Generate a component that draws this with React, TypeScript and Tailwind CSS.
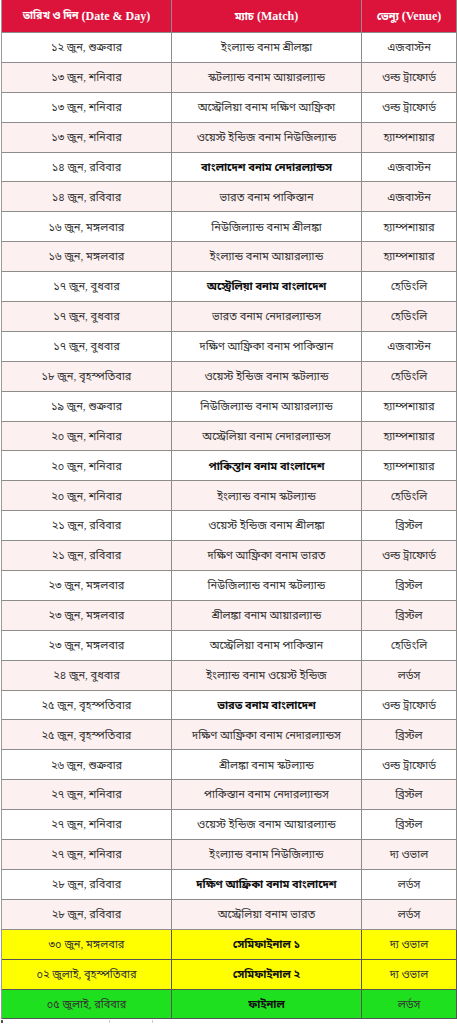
const rows: [string, string, string, boolean][] = [
  ["১২ জুন, শুক্রবার", "ইংল্যান্ড বনাম শ্রীলঙ্কা", "এজবাস্টন", false],
  ["১৩ জুন, শনিবার", "স্কটল্যান্ড বনাম আয়ারল্যান্ড", "ওল্ড ট্রাফোর্ড", false],
  ["১৩ জুন, শনিবার", "অস্ট্রেলিয়া বনাম দক্ষিণ আফ্রিকা", "ওল্ড ট্রাফোর্ড", false],
  ["১৩ জুন, শনিবার", "ওয়েস্ট ইন্ডিজ বনাম নিউজিল্যান্ড", "হ্যাম্পশায়ার", false],
  ["১৪ জুন, রবিবার", "বাংলাদেশ বনাম নেদারল্যান্ডস", "এজবাস্টন", true],
  ["১৪ জুন, রবিবার", "ভারত বনাম পাকিস্তান", "এজবাস্টন", false],
  ["১৬ জুন, মঙ্গলবার", "নিউজিল্যান্ড বনাম শ্রীলঙ্কা", "হ্যাম্পশায়ার", false],
  ["১৬ জুন, মঙ্গলবার", "ইংল্যান্ড বনাম আয়ারল্যান্ড", "হ্যাম্পশায়ার", false],
  ["১৭ জুন, বুধবার", "অস্ট্রেলিয়া বনাম বাংলাদেশ", "হেডিংলি", true],
  ["১৭ জুন, বুধবার", "ভারত বনাম নেদারল্যান্ডস", "হেডিংলি", false],
  ["১৭ জুন, বুধবার", "দক্ষিণ আফ্রিকা বনাম পাকিস্তান", "এজবাস্টন", false],
  ["১৮ জুন, বৃহস্পতিবার", "ওয়েস্ট ইন্ডিজ বনাম স্কটল্যান্ড", "হেডিংলি", false],
  ["১৯ জুন, শুক্রবার", "নিউজিল্যান্ড বনাম আয়ারল্যান্ড", "হ্যাম্পশায়ার", false],
  ["২০ জুন, শনিবার", "অস্ট্রেলিয়া বনাম নেদারল্যান্ডস", "হ্যাম্পশায়ার", false],
  ["২০ জুন, শনিবার", "পাকিস্তান বনাম বাংলাদেশ", "হ্যাম্পশায়ার", true],
  ["২০ জুন, শনিবার", "ইংল্যান্ড বনাম স্কটল্যান্ড", "হেডিংলি", false],
  ["২১ জুন, রবিবার", "ওয়েস্ট ইন্ডিজ বনাম শ্রীলঙ্কা", "ব্রিস্টল", false],
  ["২১ জুন, রবিবার", "দক্ষিণ আফ্রিকা বনাম ভারত", "ওল্ড ট্রাফোর্ড", false],
  ["২৩ জুন, মঙ্গলবার", "নিউজিল্যান্ড বনাম স্কটল্যান্ড", "ব্রিস্টল", false],
  ["২৩ জুন, মঙ্গলবার", "শ্রীলঙ্কা বনাম আয়ারল্যান্ড", "ব্রিস্টল", false],
  ["২৩ জুন, মঙ্গলবার", "অস্ট্রেলিয়া বনাম পাকিস্তান", "হেডিংলি", false],
  ["২৪ জুন, বুধবার", "ইংল্যান্ড বনাম ওয়েস্ট ইন্ডিজ", "লর্ডস", false],
  ["২৫ জুন, বৃহস্পতিবার", "ভারত বনাম বাংলাদেশ", "ওল্ড ট্রাফোর্ড", true],
  ["২৫ জুন, বৃহস্পতিবার", "দক্ষিণ আফ্রিকা বনাম নেদারল্যান্ডস", "ব্রিস্টল", false],
  ["২৬ জুন, শুক্রবার", "শ্রীলঙ্কা বনাম স্কটল্যান্ড", "ওল্ড ট্রাফোর্ড", false],
  ["২৭ জুন, শনিবার", "পাকিস্তান বনাম নেদারল্যান্ডস", "ব্রিস্টল", false],
  ["২৭ জুন, শনিবার", "ওয়েস্ট ইন্ডিজ বনাম আয়ারল্যান্ড", "ব্রিস্টল", false],
  ["২৭ জুন, শনিবার", "ইংল্যান্ড বনাম নিউজিল্যান্ড", "দ্য ওভাল", false],
  ["২৮ জুন, রবিবার", "দক্ষিণ আফ্রিকা বনাম বাংলাদেশ", "লর্ডস", true],
  ["২৮ জুন, রবিবার", "অস্ট্রেলিয়া বনাম ভারত", "লর্ডস", false],
];

const knockouts: [string, string, string, string][] = [
  ["৩০ জুন, মঙ্গলবার", "সেমিফাইনাল ১", "দ্য ওভাল", "bg-[#ffff00]"],
  ["০২ জুলাই, বৃহস্পতিবার", "সেমিফাইনাল ২", "দ্য ওভাল", "bg-[#ffff00]"],
  ["০৫ জুলাই, রবিবার", "ফাইনাল", "লর্ডস", "bg-[#1fe01f]"],
];

const cell = "flex items-center justify-center gap-[3px] border-r border-[#8c8c8c] text-center whitespace-nowrap";

export default function App() {
  return (
    <div
      className="w-[457px] h-[1024px] overflow-hidden bg-white"
      style={{ fontFamily: '"Liberation Serif", "Noto Sans Bengali", "Noto Serif Bengali", "Lohit Bengali", serif' }}
    >
      <div className="ml-[1px] w-[456px] border-l border-[#9a9a9a]">
        {/* header */}
        <div className="grid grid-cols-[170px_190px_95px] h-[33px] bg-[#dc143c] text-white font-bold text-[12px] border-b border-[#8c8c8c]">
          <div className={cell + " border-[#6b2a33]"}>
            <span className="text-[10.5px]">তারিখ ও দিন</span>
            <span>(Date &amp; Day)</span>
          </div>
          <div className={cell + " border-[#6b2a33]"}>
            <span className="text-[11px]">ম্যাচ</span>
            <span>(Match)</span>
          </div>
          <div className={cell + " border-[#6b2a33]"}>
            <span className="text-[11px]">ভেন্যু</span>
            <span>(Venue)</span>
          </div>
        </div>

        {rows.map(([date, match, venue, bold], i) => (
          <div
            key={i}
            className={
              "grid grid-cols-[170px_190px_95px] h-[29.9px] border-b border-[#8c8c8c] text-[11px] text-[#333333] " +
              (i % 2 === 1 ? "bg-[#fdf0f0]" : "bg-white")
            }
          >
            <div className={cell}>{date}</div>
            <div className={cell + (bold ? " font-bold text-[#111111]" : "")}>{match}</div>
            <div className={cell}>{venue}</div>
          </div>
        ))}

        {knockouts.map(([date, match, venue, bg], i) => (
          <div
            key={"k" + i}
            className={"grid grid-cols-[170px_190px_95px] h-[29.9px] border-b border-[#555555] text-[11px] text-[#333333] " + bg}
          >
            <div className={cell + " border-[#555555]"}>{date}</div>
            <div className={cell + " border-[#555555] font-bold text-[#111111]"}>{match}</div>
            <div className={cell + " border-[#555555]"}>{venue}</div>
          </div>
        ))}
      </div>

      {/* top edge of the next block, cut off */}
      <div className="flex h-[3px] mt-[1px]">
        <div className="w-[2px] ml-[1px] bg-[#555555]" />
        <div className="w-[107px] border-r border-[#cccccc]" />
        <div className="w-[43px] border-r border-[#cccccc]" />
      </div>
    </div>
  );
}
